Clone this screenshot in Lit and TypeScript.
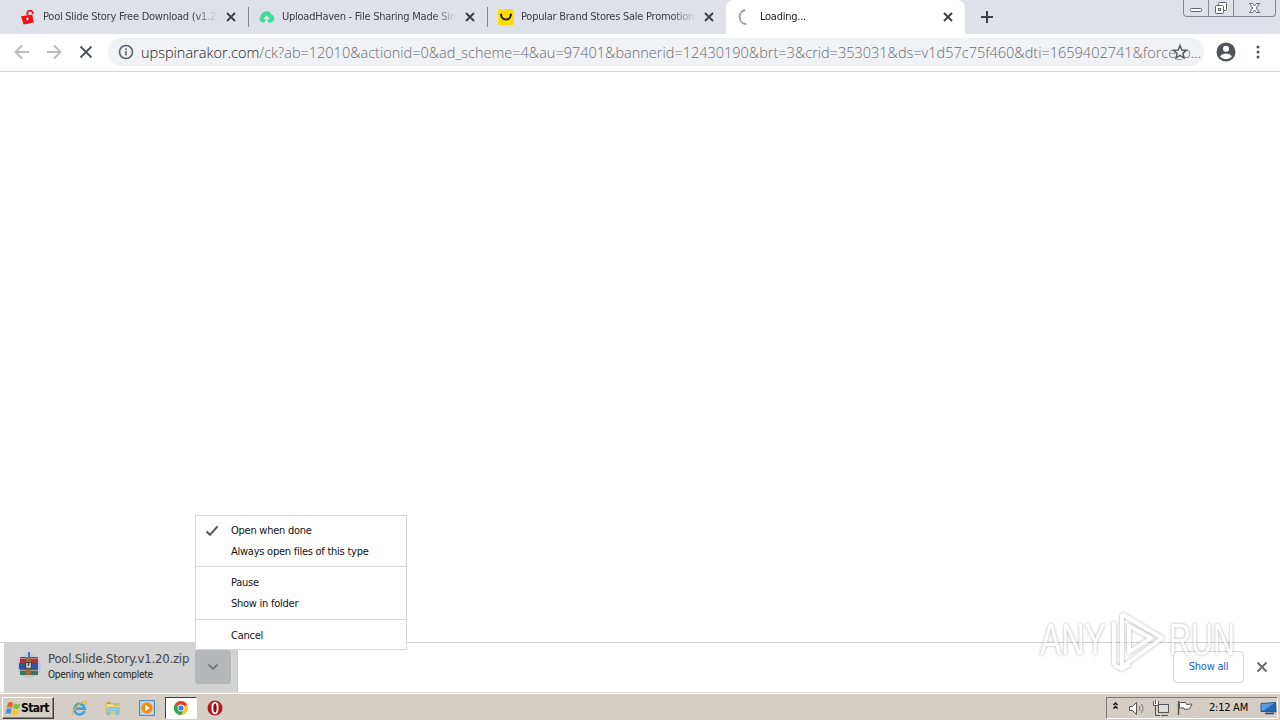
import { LitElement, html, css, svg, nothing } from 'lit';
import { customElement, property } from 'lit/decorators.js';
import { classMap } from 'lit/directives/class-map.js';

const lockIcon = svg`
  <path d="M1 7.2 12.3 5.6 13.7 13.4 3.6 15.4Z" fill="#f01018"/>
  <path d="M7.7 6.5 7.2 4.2Q7.6 1.6 10.2 1.6Q12.8 1.7 13 5" fill="none" stroke="#e8202a" stroke-width="1.9"/>
  <path d="M7.4 8.6v2.6" stroke="#fff" stroke-width="1.8"/>`;
const cloudIcon = svg`
  <path d="M3.6 13.4A3.4 3.4 0 0 1 1.6 7.6A5.8 5.8 0 0 1 12.6 5.6A4 4 0 0 1 13.2 13Q10 15 8.6 12.2L7.6 9.8 5.6 13Z" fill="#3fdc9c"/>
  <path d="M7.6 14V8.2M5 10.2 7.6 7.4 10.2 10.2" fill="none" stroke="#d9f8ea" stroke-width="1.3"/>`;
const smileIcon = svg`
  <rect width="16" height="16" rx="1" fill="#ffdb0a"/>
  <path d="M3 4.8Q3.4 10.6 8 10.6Q12.6 10.6 13 4.8" fill="none" stroke="#222" stroke-width="2"/>`;
const spinnerIcon = svg`
  <path d="M7.6 1A7.2 7.2 0 0 0 8.6 15.2" transform="translate(.6 0)" fill="none" stroke="#9b9b9b" stroke-width="1.8"/>`;

const ieIcon = svg`
  <path d="M13.5 11A5.3 5.3 0 1 1 13.8 8.6H4" fill="none" stroke="#3ba4e4" stroke-width="2.6"/>
  <path d="M2 14.6C-.6 12 9 1.6 14.4 1.6Q16.2 2 14.6 4.8" fill="none" stroke="#e9b93c" stroke-width="1.4"/>`;
const folderIcon = svg`
  <path d="M1 2h5l1 1.6h7V13H1Z" fill="#f2dc86" stroke="#c9ab4d" stroke-width=".7"/>
  <path d="M2 3.4h4M8 5h5" stroke="#6db36d" stroke-width="1.2"/>
  <path d="M2.4 14.8V9.2Q2.4 7.6 4 7.6h8Q13.6 7.6 13.6 9.2v5.6h-2.4v-4H4.8v4Z" fill="#8fd0f0" stroke="#5ba5cc" stroke-width=".6"/>`;
const mediaIcon = svg`
  <rect x=".6" y=".6" width="14.8" height="14.8" fill="#b9d7ee" stroke="#4d82b4"/>
  <circle cx="8" cy="8" r="5.7" fill="#f58a10" stroke="#e9c18a" stroke-width=".6"/>
  <path d="M6.2 4.8 11 8 6.2 11.2Z" fill="#fff"/>`;
const chromeIcon = svg`
  <circle cx="8" cy="8" r="7" fill="#fbc723"/>
  <path d="M8 8 1.9 4.5A7 7 0 0 1 14.1 4.5Z" fill="#e2402f"/>
  <path d="M8 8 1.9 4.5A7 7 0 0 0 8 15L11 9.8Z" fill="#2ea455"/>
  <path d="M8 4.5h6.1L8 8Z" fill="#e2402f"/>
  <circle cx="8" cy="8" r="3.4" fill="#fff"/><circle cx="8" cy="8" r="2.6" fill="#3f7de0"/>`;
const operaIcon = svg`
  <circle cx="8" cy="8" r="7.5" fill="#b3161c"/>
  <path d="M2.4 5A6.6 6.6 0 0 1 13.6 5Q8 7.4 2.4 5Z" fill="#dd5a5a" opacity=".6"/>
  <ellipse cx="8" cy="8" rx="2.6" ry="5.4" fill="#8c0b10" stroke="#fff" stroke-width="1.8"/>`;
const flagIcon = svg`
  <path d="M3 3Q5.8 1 8 3L7 8Q4.6 6.4 1.8 8Z" fill="#e8602c"/>
  <path d="M9 3.4Q12 5 15.4 3.4L14 8.4Q11 9.6 8 8.4Z" fill="#7fbf45"/>
  <path d="M1.6 9Q4.4 7.4 6.8 9L5.6 14Q3.2 12.4.4 14Z" fill="#4a90d8"/>
  <path d="M7.8 9.4Q10.8 10.8 13.8 9.4L12.4 14.4Q9.6 16 6.6 14.4Z" fill="#f6c32c"/>`;

const tabs = [
  { label: 'Pool Slide Story Free Download (v1.20)', icon: lockIcon },
  { label: 'UploadHaven - File Sharing Made Simple', icon: cloudIcon },
  { label: 'Popular Brand Stores Sale Promotions', icon: smileIcon },
  { label: 'Loading...', icon: spinnerIcon, active: true },
];

const menuGroups = [
  [{ label: 'Open when done', checked: true }, { label: 'Always open files of this type' }],
  [{ label: 'Pause' }, { label: 'Show in folder' }],
  [{ label: 'Cancel' }],
];

@customElement('browser-tab')
class BrowserTab extends LitElement {
  @property() label = '';
  @property({ attribute: false }) icon: unknown = nothing;
  @property({ type: Boolean, reflect: true }) active = false;

  static styles = css`
    :host {
      display: block;
      width: 239px;
      height: 34px;
      flex: none;
    }
    .tab {
      display: flex;
      align-items: center;
      box-sizing: border-box;
      height: 34px;
      padding: 0 9px 0 11px;
    }
    .icon {
      flex: none;
      width: 16px;
      height: 16px;
      margin-right: 7px;
    }
    .label {
      flex: 1;
      height: 16px;
      line-height: 16px;
      overflow: hidden;
      white-space: nowrap;
      color: #3c4043;
      mask-image: linear-gradient(to right, #000 calc(100% - 24px), transparent 100%);
    }
    .close {
      flex: none;
      width: 16px;
      height: 16px;
      margin-left: 5px;
    }
    .active {
      background: #fff;
      border-radius: 8px 8px 0 0;
    }
    .active .label {
      color: #202124;
    }
  `;

  render() {
    return html`
      <div class=${classMap({ tab: true, active: this.active })}>
        <svg class="icon" viewBox="0 0 16 16">${this.icon}</svg>
        <span class="label">${this.label}</span>
        <svg class="close" viewBox="0 0 16 16"><path d="M4 4 12 12M12 4 4 12" stroke="#3c4043" stroke-width="1.9"/></svg>
      </div>
    `;
  }
}

@customElement('download-menu')
class DownloadMenu extends LitElement {
  static styles = css`
    :host {
      display: block;
      box-sizing: border-box;
      width: 212px;
      height: 135px;
      border: 1px solid #d6d6d6;
      background: #fff;
      color: #111;
    }
    .group {
      padding: 4px 0 4px;
    }
    .group + .group {
      border-top: 1px solid #d9d9d9;
      padding: 5px 0;
    }
    .item {
      display: flex;
      align-items: center;
      height: 21px;
      padding-left: 9px;
      white-space: nowrap;
    }
    .check {
      width: 15px;
      height: 14px;
      margin-right: 11px;
    }
  `;

  render() {
    return menuGroups.map((group) => html`
      <div class="group">
        ${group.map((item: { label: string; checked?: boolean }) => html`
          <div class="item">
            <svg class="check" viewBox="0 0 15 14">
              ${item.checked ? svg`<path d="M1.5 7.5 5 10.8 12.6 2.4" fill="none" stroke="#555" stroke-width="2"/>` : nothing}
            </svg>
            <span>${item.label}</span>
          </div>
        `)}
      </div>
    `);
  }
}

@customElement('app-root')
class AppRoot extends LitElement {
  static styles = css`
    :host {
      display: flex;
      flex-direction: column;
      position: relative;
      width: 1280px;
      height: 720px;
      overflow: hidden;
      background: #fff;
      font: 11px Tahoma, 'DejaVu Sans Condensed', 'DejaVu Sans', sans-serif;
      letter-spacing: -0.25px;
    }
    svg {
      display: block;
      flex: none;
    }

    .tab-strip {
      display: flex;
      height: 34px;
      background: #dee1e8;
      padding-left: 9px;
    }
    .divider {
      width: 1px;
      height: 20px;
      margin: 7px -1px 0 0;
      background: #84878c;
    }
    .new-tab {
      margin: 9px 0 0 14px;
    }
    .window-buttons {
      display: flex;
      box-sizing: border-box;
      width: 93px;
      height: 17px;
      margin: 0 4px 0 auto;
      border: 1px solid #858a92;
      border-top: 0;
      border-radius: 0 0 4px 4px;
    }

    .toolbar {
      display: flex;
      align-items: center;
      box-sizing: border-box;
      height: 38px;
      padding: 0 12px 1px;
      border-bottom: 1px solid #d5d6d8;
    }
    .nav {
      margin-right: 12px;
    }
    .omnibox {
      display: flex;
      align-items: center;
      box-sizing: border-box;
      width: 1096px;
      height: 28px;
      margin-left: 0;
      padding: 0 10px;
      border-radius: 14px;
      background: #f0f2f5;
    }
    .url {
      width: 1030px;
      margin-left: 7px;
      white-space: nowrap;
      color: #686c70;
      font: 300 14.5px 'Open Sans', 'Noto Sans', sans-serif;
      letter-spacing: 0;
    }
    .host {
      color: #202124;
    }
    .page {
      flex: 1;
    }

    .shelf {
      display: flex;
      box-sizing: border-box;
      height: 50px;
      padding-left: 4px;
      border-top: 1px solid #d0d1d3;
    }
    .download {
      display: flex;
      box-sizing: border-box;
      width: 234px;
      padding: 7px 6px 0 11px;
      border-right: 1px solid #c4c4c4;
      background: #d3d3d3;
    }
    .file {
      width: 147px;
      margin-left: 6px;
      white-space: nowrap;
    }
    .name {
      margin-top: 1px;
      line-height: 16px;
      font: 300 13px/16px 'DejaVu Sans Condensed', sans-serif;
      letter-spacing: -0.2px;
      color: #444;
    }
    .status {
      margin-top: 1px;
      font-size: 10px;
      line-height: 14px;
      color: #222;
    }
    .drop {
      display: grid;
      place-items: center;
      width: 36px;
      height: 34px;
      border-radius: 3px;
      background: #b5b7ba;
    }
    .show-all {
      box-sizing: border-box;
      width: 71px;
      height: 32px;
      margin: 8px 10px 0 auto;
      border: 1px solid #d3d6da;
      border-radius: 4px;
      line-height: 30px;
      text-align: center;
      color: #1a62c8;
    }
    .shelf-close {
      margin: 16px 10px 0 0;
    }

    .taskbar {
      display: flex;
      align-items: center;
      box-sizing: border-box;
      height: 28px;
      padding: 2px 2px 0;
      border-top: 1px solid #d9d8d5;
      box-shadow: inset 0 1px #fff;
      background: #d5cec6;
    }
    .start {
      display: flex;
      align-items: center;
      box-sizing: border-box;
      width: 52px;
      height: 22px;
      padding-left: 2px;
      border: 1px solid;
      border-color: #fff #404040 #404040 #fff;
      box-shadow: inset -1px -1px #8a8580;
      font: bold 12px 'DejaVu Sans Condensed', sans-serif;
      letter-spacing: -0.55px;
      color: #000;
    }
    .task {
      display: grid;
      place-items: center;
      box-sizing: border-box;
      width: 32px;
      height: 22px;
      margin-right: 2px;
    }
    .pressed {
      border: 1px solid;
      border-color: #404040 #fff #fff #404040;
      background: #fff;
    }
    .launchers {
      display: flex;
      margin-left: 9px;
    }
    .tray {
      display: flex;
      align-items: center;
      box-sizing: border-box;
      width: 172px;
      height: 22px;
      margin-left: auto;
      padding-left: 5px;
      border: 1px solid;
      border-color: #7d7974 #fff #fff #7d7974;
    }
    .clock {
      width: 44px;
      margin: 0 8px 0 16px;
      white-space: nowrap;
      color: #000;
    }

    download-menu {
      position: absolute;
      left: 195px;
      top: 515px;
    }
    .watermark {
      position: absolute;
      left: 1030px;
      top: 604px;
      filter: drop-shadow(0 0 1.5px rgba(0, 0, 0, 0.42));
      opacity: 0.75;
    }
    .watermark text {
      font: 44px 'Liberation Sans', sans-serif;
      letter-spacing: 0;
      fill: #fff;
    }
  `;

  render() {
    return html`
      <div class="tab-strip">
        ${tabs.map((tab, i) => html`
          <browser-tab .label=${tab.label} .icon=${tab.icon} ?active=${tab.active}></browser-tab>
          ${i < 2 ? html`<i class="divider"></i>` : nothing}
        `)}
        <svg class="new-tab" width="16" height="16"><path d="M8 2v12M2 8h12" stroke="#3c4043" stroke-width="2"/></svg>
        <div class="window-buttons">
          <svg width="91" height="16" fill="none" stroke="#5d626b">
            <path d="M24.5 0v16M49.5 0v16" stroke="#858a92"/>
            <rect x="6.5" y="8.5" width="11" height="3" rx="1" fill="#fff"/>
            <rect x="34.5" y="2.5" width="8" height="8" rx="1" fill="#fff"/>
            <rect x="31.5" y="5.5" width="8" height="8" rx="1" fill="#fff"/>
            <rect x="34.5" y="8.5" width="2" height="2"/>
            <path d="M65.500 3.500h3l2 2.500 2-2.500h3l-3.200 4.500 3.200 4.500h-3l-2-2.500-2 2.500h-3l3.200-4.500Z" fill="#fff"/>
          </svg>
        </div>
      </div>

      <div class="toolbar">
        <svg class="nav" width="20" height="20" fill="none" stroke="#bababa" stroke-width="1.8"><path d="M17 10H4M10 3.500 3.500 10l6.500 6.500"/></svg>
        <svg class="nav" width="20" height="20" fill="none" stroke="#bababa" stroke-width="1.8"><path d="M3 10h13M10 3.500 16.500 10 10 16.500"/></svg>
        <svg class="nav" width="20" height="20" stroke="#4d5156" stroke-width="1.8"><path d="M4.500 4.500 15.500 15.500M15.500 4.500 4.500 15.500"/></svg>
        <div class="omnibox">
          <svg width="16" height="16" fill="none" stroke="#5f6368" stroke-width="1.6"><circle cx="8" cy="8" r="6.500"/><path d="M8 7v4.500M8 4.300v1.600"/></svg>
          <div class="url"><span class="host">upspinarakor.com</span>/ck?ab=12010&actionid=0&ad_scheme=4&au=97401&bannerid=12430190&brt=3&crid=353031&ds=v1d57c75f460&dti=1659402741&force_o...</div>
          <svg width="18" height="18" style=""><path d="M9 2.500 10.800 7l4.700.3-3.600 3 1.100 4.700-4-2.600-4 2.600 1.100-4.700-3.600-3L7.200 7Z" fill="none" stroke="#54585d" stroke-width="1.4"/></svg>
        </div>
        <svg width="64" height="20" viewBox="1204 0 64 20" fill="#505459">
          <circle cx="1226" cy="10" r="9.500"/>
          <circle cx="1226" cy="6.800" r="3" fill="#fff"/>
          <path d="M1220 14.200Q1222 11.500 1226 11.500Q1230 11.500 1232 14.200Q1230 17 1226 17Q1222 17 1220 14.200Z" fill="#fff"/>
          <circle cx="1258" cy="5" r="1.500"/><circle cx="1258" cy="10" r="1.500"/><circle cx="1258" cy="15" r="1.500"/>
        </svg>
      </div>

      <div class="page"></div>

      <div class="shelf">
        <div class="download">
          <svg width="27" height="34">
            <circle cx="14" cy="16" r="12" fill="#b9c9da"/>
            <path d="M14 2v6" stroke="#5476b0" stroke-width="2"/>
            <rect x="5" y="7" width="18" height="6" fill="#a5363e"/>
            <rect x="4" y="13" width="19" height="6" fill="#34559b"/>
            <rect x="5" y="19" width="18" height="6" fill="#32795c"/>
            <path d="M5 8.500h18M5 20.500h18" stroke="#e7bcbc" stroke-width=".6"/>
            <rect x="11" y="7" width="5" height="18" fill="#98683b"/>
            <rect x="10" y="12" width="7" height="7" fill="#4d4243"/>
            <path d="M12 13v4h3v-4" fill="none" stroke="#f2eee6" stroke-width="1.300"/>
          </svg>
          <div class="file">
            <div class="name">Pool.Slide.Story.v1.20.zip</div>
            <div class="status">Opening when complete</div>
          </div>
          <div class="drop">
            <svg width="12" height="12"><path d="M1.500 3.500 6 8l4.500-4.500" fill="none" stroke="#767a7f" stroke-width="1.800"/></svg>
          </div>
        </div>
        <div class="show-all">Show all</div>
        <svg class="shelf-close" width="16" height="16"><path d="M3.500 3.500 12.500 12.500M12.500 3.500 3.500 12.500" stroke="#6a6d71" stroke-width="2"/></svg>
      </div>

      <div class="taskbar">
        <div class="start"><svg width="16" height="16">${flagIcon}</svg>Start</div>
        <div class="launchers">
          ${[ieIcon, folderIcon, mediaIcon, chromeIcon, operaIcon].map((icon, i) => html`
            <div class=${classMap({ task: true, pressed: i === 3 })}>
              <svg width="16" height="16">${icon}</svg>
            </div>
          `)}
        </div>
        <div class="tray">
          <svg width="81" height="20" fill="none" stroke="#555">
            <path d="M1.500 7 3.500 5l2 2M1.500 10.500l2-2 2 2" stroke="#000" stroke-width="1.400"/>
            <path d="M17.500 8.500h3l4-4v12l-4-4h-3Z" fill="#fff"/>
            <path d="M27 8q2 2.500 0 5M29.500 6q3 4.500 0 9" stroke="#777"/>
            <rect x="46.500" y="6.500" width="10" height="8" fill="#ddd"/>
            <path d="M49 17.500h7M43.500 8v9.500H48" />
            <path d="M41.500 3v4.500h5V3M43.500 2v4" fill="#fff"/>
            <path d="M66.500 3v14" stroke-width="1.400"/>
            <path d="M67.500 4.500h6l1 2 5.500-.5-2.500 5-5 .5-.5-1.500h-4.500Z" fill="#fff"/>
          </svg>
          <span class="clock">2:12 AM</span>
          <svg width="17" height="16">
            <path d="M1 3.500 15.500 2.500 16 12 1 11.500Z" fill="#2568b5" stroke="#183f77" stroke-width=".8"/>
            <path d="M1.500 4 14 3 4 10.500H1.500Z" fill="#5b9de0"/>
            <path d="M5 13.500h9" stroke="#33475f" stroke-width="1.500"/>
          </svg>
        </div>
      </div>

      <download-menu></download-menu>
      <svg class="watermark" width="210" height="76">
        <text x="10" y="51" textLength="66" lengthAdjust="spacingAndGlyphs">ANY</text>
        <text x="139" y="51" textLength="66" lengthAdjust="spacingAndGlyphs">RUN</text>
        <path d="M84 18v43M92 10 132 34 92 63V10M84 61l8 4 8-5M99 22v26l22-14Z" fill="none" stroke="#fff" stroke-width="4" stroke-linejoin="round"/>
      </svg>
    `;
  }
}
